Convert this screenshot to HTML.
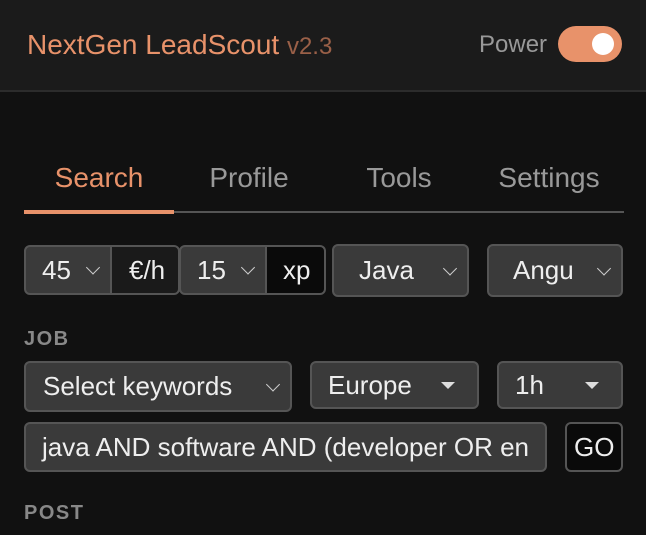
<!DOCTYPE html>
<html><head><meta charset="utf-8"><style>
*{box-sizing:border-box;margin:0;padding:0}
body{width:646px;height:535px;background:#111;font-family:"Liberation Sans",sans-serif;overflow:hidden;position:relative;color:#eee}
.hdr{position:absolute;left:0;top:0;width:646px;height:92px;background:#1b1b1b;border-bottom:2px solid #2c2c2c}
.a{position:absolute;white-space:nowrap}
.t{left:27px;top:29px;font-size:28px;color:#e8926a}
.t span{font-size:24px;color:#9a6048}
.pw{left:479px;top:31px;font-size:24px;color:#999}
.tg{left:558px;top:26px;width:64px;height:36px;border-radius:18px;background:#e8926a}
.tg:after{content:"";position:absolute;right:8px;top:7px;width:22px;height:22px;border-radius:50%;background:#fff}
.tab{top:162px;font-size:28px;color:#999;transform:translateX(-50%)}
.box{position:absolute;background:#3a3a3a;border:2px solid #555;border-radius:6px;font-size:26px;color:#eee;display:flex;align-items:center;padding-left:16px;white-space:nowrap}
.ch{position:absolute;right:12px;top:50%;width:10px;height:10px;border-right:1.5px solid #ccc;border-bottom:1.5px solid #ccc;transform:translateY(-75%) rotate(45deg)}
.tri{position:absolute;right:22px;top:50%;margin-top:-3px;border-left:7px solid transparent;border-right:7px solid transparent;border-top:7px solid #ddd}
.lbl{left:24px;font-size:20px;font-weight:bold;color:#888;letter-spacing:1.5px}
</style></head><body>
<div class="hdr"></div>
<div class="a t">NextGen LeadScout <span>v2.3</span></div>
<div class="a pw">Power</div>
<div class="a tg"></div>
<div class="a tab" style="left:99px;color:#e8926a">Search</div>
<div class="a tab" style="left:249px">Profile</div>
<div class="a tab" style="left:399px">Tools</div>
<div class="a tab" style="left:549px">Settings</div>
<div class="a" style="left:24px;top:211px;width:600px;height:2px;background:#555"></div>
<div class="a" style="left:24px;top:210px;width:150px;height:4px;background:#e8926a"></div>

<div class="box" style="left:24px;top:245px;width:88px;height:50px;border-radius:6px 0 0 6px">45<i class="ch"></i></div>
<div class="box" style="left:110px;top:245px;width:70px;height:50px;background:#1a1a1a;border-radius:0 6px 6px 0;padding-left:17px">€/h</div>
<div class="box" style="left:179px;top:245px;width:88px;height:50px;border-radius:6px 0 0 6px">15<i class="ch"></i></div>
<div class="box" style="left:265px;top:245px;width:61px;height:50px;background:#0a0a0a;border-radius:0 6px 6px 0;padding-left:16px">xp</div>
<div class="box" style="left:332px;top:244px;width:137px;height:53px;padding-left:25px">Java<i class="ch"></i></div>
<div class="box" style="left:487px;top:244px;width:136px;height:53px;padding-left:24px">Angu<i class="ch"></i></div>

<div class="a lbl" style="top:328px">JOB</div>
<div class="box" style="left:24px;top:361px;width:268px;height:51px;padding-left:17px">Select keywords<i class="ch"></i></div>
<div class="box" style="left:310px;top:361px;width:169px;height:48px;padding-left:16px">Europe<i class="tri"></i></div>
<div class="box" style="left:497px;top:361px;width:126px;height:48px;padding-left:16px">1h<i class="tri"></i></div>

<div class="box" style="left:24px;top:422px;width:523px;height:50px;padding-left:16px;overflow:hidden">java AND software AND (developer OR en</div>
<div class="box" style="left:565px;top:422px;width:58px;height:50px;background:#0a0a0a;padding-left:7px">GO</div>

<div class="a lbl" style="top:502px">POST</div>
</body></html>
